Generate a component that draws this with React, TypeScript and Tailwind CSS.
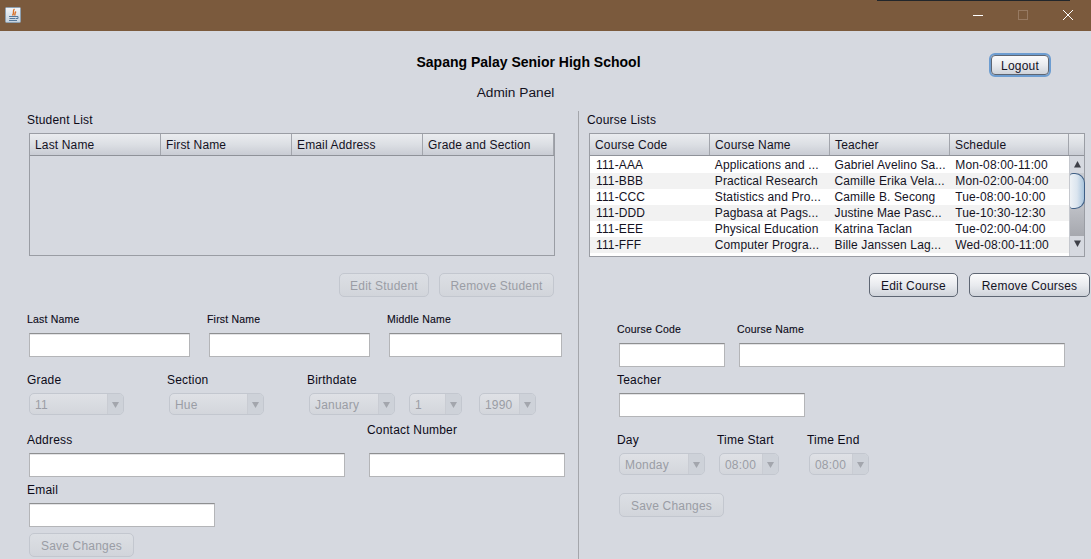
import React from "react";

const Label = ({ children, className = "" }: { children: React.ReactNode; className?: string }) => (
  <div className={`h-[14px] leading-[14px] text-[12px] tracking-[0.2px] text-[#0c0a18] whitespace-nowrap ${className}`}>{children}</div>
);

const SmallLabel = ({ children, className = "" }: { children: React.ReactNode; className?: string }) => (
  <div className={`h-[14px] leading-[14px] text-[10.5px] tracking-[0.2px] [-webkit-text-stroke:0.12px_#0c0a18] text-[#0c0a18] whitespace-nowrap ${className}`}>{children}</div>
);

const Input = ({ className = "" }: { className?: string }) => (
  <div className={`h-[24px] bg-white border border-[#b4b5b8] border-t-[#8e8f91] shadow-[inset_0_1px_0_#e4e4e6] shrink-0 ${className}`} />
);

const Button = ({ children, disabled, className = "" }: { children: React.ReactNode; disabled?: boolean; className?: string }) => (
  <div
    className={`h-[24px] flex items-center justify-center pt-px rounded-[5px] border text-[12px] tracking-[0.2px] shrink-0 ${
      disabled
        ? "border-[#c3c7cf] text-[#9a9da5] bg-gradient-to-b from-[#dcdfe4] to-[#d2d5db]"
        : "border-[#5e6673] text-[#14121f] bg-gradient-to-b from-[#fbfbfc] via-[#e9ebef] to-[#cfd3da]"
    } ${className}`}
  >
    {children}
  </div>
);

const Combo = ({ value, className = "" }: { value: string; className?: string }) => (
  <div className={`h-[22px] flex rounded-[5px] border border-[#c3c7cf] bg-gradient-to-b from-[#dfe1e6] to-[#d3d6dc] text-[12px] tracking-[0.2px] text-[#9a9da5] shrink-0 ${className}`}>
    <div className="flex-1 pl-[5px] leading-[22px]">{value}</div>
    <div className="w-[16px] border-l border-[#c9ccd3] bg-[#ced2d9] rounded-r-[4px] flex items-center justify-center">
      <svg width="7" height="7" viewBox="0 0 7 7"><path d="M0 1h7L3.5 7z" fill="#a3a6ad" /></svg>
    </div>
  </div>
);

const HeaderCell = ({ children, className = "" }: { children?: React.ReactNode; className?: string }) => (
  <div className={`h-full pl-[5px] leading-[22px] text-[12px] tracking-[0.15px] text-[#14121f] border-r border-[#a2a5ac] whitespace-nowrap overflow-hidden ${className}`}>
    {children}
  </div>
);

const headerBg = "bg-gradient-to-b from-[#eaecef] via-[#dcdfe4] to-[#c9ccd4]";

const courses = [
  ["111-AAA", "Applications and ...", "Gabriel Avelino Sa...", "Mon-08:00-11:00"],
  ["111-BBB", "Practical Research", "Camille Erika Vela...", "Mon-02:00-04:00"],
  ["111-CCC", "Statistics and Pro...", "Camille B. Secong", "Tue-08:00-10:00"],
  ["111-DDD", "Pagbasa at Pags...", "Justine Mae Pasc...", "Tue-10:30-12:30"],
  ["111-EEE", "Physical Education", "Katrina Taclan", "Tue-02:00-04:00"],
  ["111-FFF", "Computer Progra...", "Bille Janssen Lag...", "Wed-08:00-11:00"],
];

function JavaIcon() {
  return (
    <svg width="16" height="16" viewBox="0 0 16 16" className="shrink-0">
      <defs>
        <linearGradient id="jbg" x1="0" y1="0" x2="0" y2="1">
          <stop offset="0" stopColor="#f4f6f8" />
          <stop offset="1" stopColor="#c5d2de" />
        </linearGradient>
      </defs>
      <rect x="0.5" y="0.5" width="15" height="15" rx="1" fill="url(#jbg)" stroke="#8ea0b0" />
      <path d="M9.5 2C7 4 10 5 7.5 8.5M11 4.5C9.5 6 10.5 7 9.5 8.5" fill="none" stroke="#d9722a" strokeWidth="1.4" />
      <path d="M4 9.5h7M4.5 11.5h6M4 13.5h8M11 9.5h2v2h-2" fill="none" stroke="#56789a" strokeWidth="1" />
    </svg>
  );
}

export default function App() {
  return (
    <div className="relative w-[1091px] h-[559px] overflow-hidden bg-[#d6d9e0] font-['Liberation_Sans',Arial,sans-serif]">
      {/* Title bar */}
      <div className="h-[31px] bg-[#7b5a3d] flex items-center pl-[5px] pb-[1px]">
        <JavaIcon />
        <div className="ml-auto flex items-center">
          <svg width="12" height="12" viewBox="0 0 12 12" className="mr-[33px]"><path d="M1 6.5h10" stroke="#fff" strokeWidth="1" /></svg>
          <svg width="12" height="12" viewBox="0 0 12 12" className="mr-[33px]"><rect x="1.5" y="1.5" width="9" height="9" fill="none" stroke="#977a62" /></svg>
          <svg width="12" height="12" viewBox="0 0 12 12" className="mr-[17px]"><path d="M1 1l10 10M11 1L1 11" stroke="#fff" strokeWidth="1" /></svg>
        </div>
      </div>
      <div className="absolute left-[877px] top-0 w-[193px] h-px bg-[#22262b]" />

      {/* Header */}
      <div className="h-[80px] relative flex flex-col items-center">
        <div className="mt-[23px] h-[16px] leading-[16px] text-[14px] font-bold text-black -translate-x-[17px]">Sapang Palay Senior High School</div>
        <div className="mt-[15px] h-[16px] leading-[16px] text-[13.7px] text-[#14121f] -translate-x-[30px]">Admin Panel</div>
        <div className="absolute left-[989px] top-[22px] w-[62px] h-[24px] rounded-[6px] border-2 border-[#6d9dd1]">
          <Button className="w-full !h-full !rounded-[4px]">Logout</Button>
        </div>
      </div>

      <div className="flex h-[448px]">
        {/* Left: students */}
        <div className="w-[579px] shrink-0 border-r border-[#a4a6ab] pl-[29px]">
          <Label className="mt-[2px] -ml-[2px]">Student List</Label>
          <div className="mt-[6px] w-[526px] h-[123px] border border-[#9a9da4]">
            <div className={`h-[22px] flex border-b border-[#8f9299] ${headerBg}`}>
              <HeaderCell className="w-[131px]">Last Name</HeaderCell>
              <HeaderCell className="w-[131px]">First Name</HeaderCell>
              <HeaderCell className="w-[131px]">Email Address</HeaderCell>
              <HeaderCell className="w-[131px]">Grade and Section</HeaderCell>
            </div>
          </div>
          <div className="mt-[17px] flex gap-[10px] pl-[310px]">
            <Button disabled className="w-[90px]">Edit Student</Button>
            <Button disabled className="w-[115px]">Remove Student</Button>
          </div>
          <div className="mt-[15px] flex -ml-[2px]">
            <SmallLabel className="w-[180px]">Last Name</SmallLabel>
            <SmallLabel className="w-[180px]">First Name</SmallLabel>
            <SmallLabel>Middle Name</SmallLabel>
          </div>
          <div className="mt-[7px] flex">
            <Input className="w-[161px]" />
            <Input className="w-[161px] ml-[19px]" />
            <Input className="w-[173px] ml-[19px]" />
          </div>
          <div className="mt-[16px] flex -ml-[2px]">
            <Label className="w-[140px]">Grade</Label>
            <Label className="w-[140px]">Section</Label>
            <Label>Birthdate</Label>
          </div>
          <div className="mt-[6px] flex">
            <Combo value="11" className="w-[95px]" />
            <Combo value="Hue" className="w-[95px] ml-[45px]" />
            <Combo value="January" className="w-[86px] ml-[45px]" />
            <Combo value="1" className="w-[53px] ml-[14px]" />
            <Combo value="1990" className="w-[57px] ml-[17px]" />
          </div>
          <div className="mt-[8px] flex -ml-[2px]">
            <Label className="w-[340px] mt-[10px]">Address</Label>
            <Label>Contact Number</Label>
          </div>
          <div className="mt-[-1px] pt-[7px] flex">
            <Input className="w-[316px]" />
            <Input className="w-[196px] ml-[24px]" />
          </div>
          <Label className="mt-[6px] -ml-[2px]">Email</Label>
          <Input className="mt-[6px] w-[186px]" />
          <Button disabled className="mt-[6px] w-[105px]">Save Changes</Button>
        </div>

        {/* Right: courses */}
        <div className="flex-1 pl-[10px]">
          <Label className="mt-[2px] -ml-[2px]">Course Lists</Label>
          <div className="mt-[6px] w-[496px] h-[124px] border border-[#9a9da4] bg-white">
            <div className={`h-[22px] flex border-b border-[#8f9299] ${headerBg}`}>
              <HeaderCell className="w-[120px]">Course Code</HeaderCell>
              <HeaderCell className="w-[120px]">Course Name</HeaderCell>
              <HeaderCell className="w-[120px]">Teacher</HeaderCell>
              <HeaderCell className="w-[119px]">Schedule</HeaderCell>
            </div>
            <div className="flex h-[100px]">
              <div className="w-[479px] pt-[1px]">
                {courses.map((row, i) => (
                  <div key={row[0]} className={`flex h-[16px] leading-[16px] text-[12px] tracking-[0.13px] text-[#14121f] ${i % 2 ? "bg-[#f2f2f2]" : "bg-white"}`}>
                    {row.map((cell, c) => (
                      <div key={cell} className={`w-[120px] whitespace-nowrap overflow-hidden ${c === 0 || c === 3 ? "pl-[6px]" : "pl-[5px]"}`}>{cell}</div>
                    ))}
                  </div>
                ))}
              </div>
              {/* Scrollbar */}
              <div className="w-[15px] flex flex-col items-center bg-gradient-to-b from-[#cdd0d6] via-[#bfc1c7] to-[#96989f] border-l border-[#c5c8ce]">
                <div className="h-[17px] w-full bg-[#d6d9e0] flex items-center justify-center">
                  <svg width="7" height="7" viewBox="0 0 7 7"><path d="M0 6.5h7L3.5 0z" fill="#3e4048" /></svg>
                </div>
                <div className="w-[15px] h-[36px] rounded-r-[10px] rounded-l-[3px] border border-l-0 border-[#3f5f86] bg-gradient-to-r from-[#eef2f6] via-[#dbe5ef] to-[#a9c4dc] shrink-0" />
                <div className="flex-1" />
                <div className="h-[20px] w-full bg-[#d6d9e0] flex items-start pt-[4px] justify-center">
                  <svg width="7" height="7" viewBox="0 0 7 7"><path d="M0 .5h7L3.5 7z" fill="#3e4048" /></svg>
                </div>
              </div>
            </div>
          </div>
          <div className="mt-[16px] flex pl-[280px]">
            <Button className="w-[89px]">Edit Course</Button>
            <Button className="w-[121px] ml-[11px]">Remove Courses</Button>
          </div>
          <div className="mt-[25px] flex pl-[28px]">
            <SmallLabel className="w-[120px]">Course Code</SmallLabel>
            <SmallLabel>Course Name</SmallLabel>
          </div>
          <div className="mt-[7px] flex pl-[30px]">
            <Input className="w-[106px]" />
            <Input className="w-[326px] ml-[14px]" />
          </div>
          <Label className="mt-[6px] ml-[28px]">Teacher</Label>
          <Input className="mt-[6px] ml-[30px] w-[186px]" />
          <div className="mt-[16px] flex pl-[28px]">
            <Label className="w-[100px]">Day</Label>
            <Label className="w-[90px]">Time Start</Label>
            <Label>Time End</Label>
          </div>
          <div className="mt-[6px] flex pl-[30px]">
            <Combo value="Monday" className="w-[86px]" />
            <Combo value="08:00" className="w-[60px] ml-[14px]" />
            <Combo value="08:00" className="w-[60px] ml-[30px]" />
          </div>
          <Button disabled className="mt-[18px] ml-[30px] w-[105px]">Save Changes</Button>
        </div>
      </div>
    </div>
  );
}
